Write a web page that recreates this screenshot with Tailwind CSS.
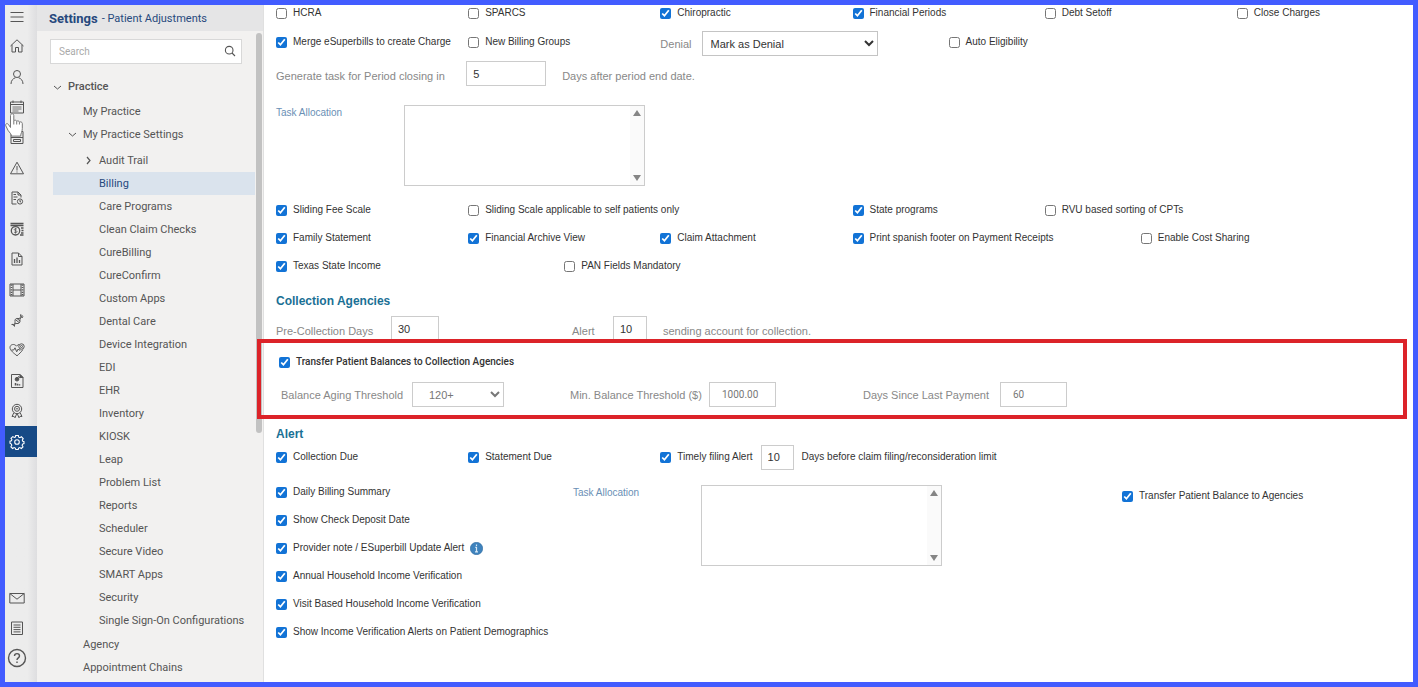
<!DOCTYPE html>
<html lang="en">
<head>
<meta charset="utf-8">
<title>Settings - Patient Adjustments</title>
<script src="https://cdn.jsdelivr.net/npm/@tailwindcss/browser@4"></script>
</head>
<body class="bg-white">
<div class="relative flex h-screen overflow-hidden border-[5px] border-[#425cff] font-['Liberation_Sans',Arial,sans-serif] text-[11px] leading-4 text-[#333]">

  <!-- Icon rail -->
  <nav aria-label="Modules" class="relative flex w-8 shrink-0 flex-col bg-linear-to-r from-[#ececec] from-70% to-[#dedee0] text-[#555]">
    <button aria-label="Menu" class="flex h-[26px] w-6 shrink-0 items-start justify-center pt-1"><svg class="size-4" viewBox="0 0 16 16" fill="none" stroke="currentColor" stroke-width="1.1"><path d="M1.5 3.5h13M1.5 8h13M1.5 12.5h13"/></svg></button>
    <div class="flex h-[426px] flex-col *:flex *:w-6 *:flex-1 *:items-center *:justify-center">
      <button aria-label="Home"><svg class="size-4" viewBox="0 0 16 16" fill="none" stroke="currentColor"><path d="M1.5 8 8 1.8 14.500 8M3 6.800V14h3.500V9.500h3V14H13V6.800"/></svg></button>
      <button aria-label="Patients"><svg class="size-4" viewBox="0 0 16 16" fill="none" stroke="currentColor"><circle cx="8" cy="5" r="3.500"/><path d="M2 15c0-3.500 2-5.500 4.500-6.300M14 15c0-3.500-2-5.500-4.500-6.300"/></svg></button>
      <button aria-label="Scheduler"><svg class="size-4" viewBox="0 0 16 16" fill="none" stroke="currentColor"><path d="M1.500 3h13v11h-13zM1.500 5.500h13M4 1.500V4M12 1.500V4"/><path d="M3.500 8h9M3.500 10h9M3.500 12h6" stroke-width=".8"/></svg></button>
      <button aria-label="Billing"><svg class="size-4" viewBox="0 0 16 16" fill="none" stroke="currentColor"><path d="M2 2.500h12v12H2zM2 8.500h12M4.500 10.500h7v2h-7zM6 5.500h4"/></svg></button>
      <button aria-label="Alerts"><svg class="size-4" viewBox="0 0 16 16" fill="none" stroke="currentColor"><path d="M8 2.200 14.500 13.800h-13zM8 6v4.500M8 11.500v1"/></svg></button>
      <button aria-label="Claims"><svg class="size-4" viewBox="0 0 16 16" fill="none" stroke="currentColor"><path d="M7.500 14H3V2h6l3 3v2.500M9 2v3h3M4.500 4.500h2.500M4.500 7h4M4.500 9.500h2.500"/><circle cx="11" cy="11.500" r="2.600"/><path d="M11 10v1.800h1"/></svg></button>
      <button aria-label="Payments"><svg class="size-4" viewBox="0 0 16 16" fill="none" stroke="currentColor"><path d="M1.500 2.500h13M1.500 4.500h13" stroke-width="1.500"/><path d="M12 7h2.500M12.500 9.500h2M12 12h2.500M11 14h3.500" stroke-width="1.300"/><circle cx="6.500" cy="9.800" r="4.200" stroke-width="1.300"/><path d="M8 8.200c-.8-.8-2.800-.6-2.800.4s2.800.9 2.800 2-2 1.300-3 .4M6.500 7v5.600" stroke-width=".8"/></svg></button>
      <button aria-label="Reports"><svg class="size-4" viewBox="0 0 16 16" fill="none" stroke="currentColor"><path d="M3 2h6.500L13 5.500V14H3zM9.500 2v3.500H13"/><path d="M5.500 12V8M8 12V6.500M10.500 12V9" stroke-width="1.300"/></svg></button>
      <button aria-label="Media"><svg class="size-4" viewBox="0 0 16 16" fill="none" stroke="currentColor"><path d="M1 2h14v12H1zM4 2v12M12 2v12M4 8h8"/><path d="M2.500 2.500v11M13.500 2.500v11" stroke-width="1.600" stroke-dasharray="1.200 1.200"/></svg></button>
      <button aria-label="Genomics"><svg class="size-4" viewBox="0 0 16 16" fill="none" stroke="currentColor"><path d="M2.500 12.500c2.500.5 4-.5 3.500-3s1.500-3.500 3-3 3.500-1 2.500-4M5.500 14.500c-.5-2.500 1-3.500 2.500-3s3.500-1 3-3 1-3.500 3-3.500M7 8l3 2.500M8 6.500l3 2.500M3 12l2.500 2M11.500 4l2 1.500M12 2.500l2 2"/></svg></button>
      <button aria-label="Vitals"><svg class="size-4" viewBox="0 0 16 16" fill="none" stroke="currentColor"><path d="M13.800 7.500C12.500 10 10 12 8 13.800 5 11.300 1 8.500 1 5.500c0-3.200 4.500-4.200 6.500-1.300C8 3.300 9 2.700 10 2.500"/><path d="M2.500 8h2.200L6 5.800l1.700 4L9.200 7l.8 1h1.500"/><circle cx="12.500" cy="4.500" r="2.700"/><circle cx="12.500" cy="4.500" r="1"/></svg></button>
      <button aria-label="Analytics"><svg class="size-4" viewBox="0 0 16 16" fill="none" stroke="currentColor"><path d="M2.500 1.500h8.500L14 4.500v10H2.500z"/><path d="M11 1.500v3h3z" fill="currentColor"/><circle cx="8" cy="6.200" r="1.800" fill="currentColor"/><path d="M9 3.500c1 .2 1.500.8 1.700 1.700"/><path d="M6.500 12.500V10M8.500 12.500v-1.700M10.500 12.500v-1.300" stroke-width="1.500"/></svg></button>
      <button aria-label="Awards"><svg class="size-4" viewBox="0 0 16 16" fill="none" stroke="currentColor"><circle cx="8" cy="6" r="4.700"/><circle cx="8" cy="5.800" r="2.500"/><path d="M6.800 5.800h2.400M4.800 9.800 3 13.500l2-.2 1 1.500 1.700-4M11.200 9.800l1.800 3.700-2-.2-1 1.500-1.700-4"/></svg></button>
      <button aria-label="Settings" class="min-w-8 bg-[#174a86] pr-2 text-white"><svg class="size-4" viewBox="0 0 16 16" fill="none" stroke="currentColor" stroke-width="1.100"><path d="M6.700 1.500h2.600l.4 1.700 1.200.5 1.500-.9 1.800 1.800-.9 1.500.5 1.200 1.200.4v1.900l-1.400.5-.5 1.200.9 1.500-1.700 1.700-1.500-.9-1.200.5-.4 1.400H6.800l-.5-1.400-1.200-.5-1.500.9-1.700-1.700.9-1.500-.5-1.200L1 9.300V7.200l1.400-.5.500-1.200L2 4.300 3.800 2.600l1.500.9 1.100-.4z"/><circle cx="8" cy="8" r="2.300"/></svg></button>
    </div>
    <div class="mt-auto flex flex-col pb-[9px] *:flex *:h-[30px] *:w-6 *:items-center *:justify-center">
      <button aria-label="Messages"><svg class="size-4" viewBox="0 0 16 16" fill="none" stroke="currentColor"><path d="M.8 3.500h14.400v9.500H.8zM.8 3.500 8 9.200l7.200-5.700"/></svg></button>
      <button aria-label="Notes"><svg class="size-4" viewBox="0 0 16 16" fill="none" stroke="currentColor"><path d="M2.500 2h11v12.500h-11zM4.500 5h7M4.500 7.300h7M4.500 9.600h7M4.500 11.900h7"/></svg></button>
      <button aria-label="Help"><svg class="size-5" viewBox="0 0 20 20" fill="none" stroke="currentColor" stroke-width="1.400"><circle cx="10" cy="10" r="8.500"/><path d="M7.500 8c0-3.200 5-3.200 5 0 0 1.800-2.500 2-2.500 4M10 13.500V15"/></svg></button>
    </div>
    <svg class="absolute top-[108px] left-0 h-6 w-[18px]" viewBox="0 0 18 24" fill="#fff" stroke="#777" stroke-linejoin="round"><path d="M5.500 14.500V2.500c0-2.300 3.300-2.300 3.300 0v5.400c.6-1.100 2.900-.9 2.900.6.600-1.100 2.700-.7 2.700.8.700-.9 2.900-.4 2.900 1.100v5.200c0 3.300-1.600 4.400-1.600 7.500H6.500c0-2-1.800-3.300-3.500-5.800L.9 13c-1-2.100 1.200-3.200 2.500-1.600z"/><path d="M8.800 8v3.500M11.700 8.500v3M14.400 9.300v2.200" fill="none"/></svg>
  </nav>

  <!-- Settings tree -->
  <aside class="flex w-[227px] shrink-0 flex-col border-r border-[#e0e0e0] bg-[#f2f1f0] font-[Roboto,sans-serif] text-[#555]">
    <h1 class="flex h-[26px] shrink-0 items-center gap-1 bg-[#e5e5e6] pl-3 pt-0.5 text-[11px] text-[#27497d]"><span class="text-[13px] font-bold">Settings</span><span>- Patient Adjustments</span></h1>
    <div class="flex min-h-0 flex-1 justify-between pt-0.5">
      <div class="w-[218px] pt-1.5 pl-[13px]">
        <div class="relative w-48">
          <input type="search" aria-label="Search" placeholder="Search" class="block h-[25px] w-full border border-[#d8d8d8] bg-white px-2 text-[10px] outline-none placeholder:text-[#aaa]">
          <svg class="absolute top-1.5 right-1.5 size-3" viewBox="0 0 12 12" fill="none" stroke="#555" stroke-width="1.100"><circle cx="5.200" cy="5.200" r="3.800"/><path d="m8 8 3 3"/></svg>
        </div>
        <ul class="pt-2.5 pl-[3px]">
          <li>
            <a href="#" class="flex h-[26px] items-center gap-1.5 font-medium"><svg class="size-[9px]" viewBox="0 0 9 9" fill="none" stroke="currentColor"><path d="m1 3 3.500 3L8 3"/></svg>Practice</a>
            <ul class="*:*:flex *:*:h-[23px] *:*:items-center">
              <li><a href="#" class="pl-[30px]">My Practice</a></li>
              <li><a href="#" class="gap-1.5 pl-[15px]"><svg class="size-[9px]" viewBox="0 0 9 9" fill="none" stroke="currentColor"><path d="m1 3 3.500 3L8 3"/></svg>My Practice Settings</a></li>
            </ul>
            <ul class="pt-[3px] pb-px *:*:flex *:*:h-[23px] *:*:items-center">
              <li><a href="#" class="gap-1.5 pl-[31px]"><svg class="size-[9px]" viewBox="0 0 9 9" fill="none" stroke="currentColor" stroke-width="1.200"><path d="m3 1 3 3.500L3 8"/></svg>Audit Trail</a></li>
              <li><a href="#" aria-current="page" class="bg-[#dae3ed] pl-[46px] text-[#27497d]">Billing</a></li>
              <li><a href="#" class="pl-[46px]">Care Programs</a></li>
              <li><a href="#" class="pl-[46px]">Clean Claim Checks</a></li>
              <li><a href="#" class="pl-[46px]">CureBilling</a></li>
              <li><a href="#" class="pl-[46px]">CureConfirm</a></li>
              <li><a href="#" class="pl-[46px]">Custom Apps</a></li>
              <li><a href="#" class="pl-[46px]">Dental Care</a></li>
              <li><a href="#" class="pl-[46px]">Device Integration</a></li>
              <li><a href="#" class="pl-[46px]">EDI</a></li>
              <li><a href="#" class="pl-[46px]">EHR</a></li>
              <li><a href="#" class="pl-[46px]">Inventory</a></li>
              <li><a href="#" class="pl-[46px]">KIOSK</a></li>
              <li><a href="#" class="pl-[46px]">Leap</a></li>
              <li><a href="#" class="pl-[46px]">Problem List</a></li>
              <li><a href="#" class="pl-[46px]">Reports</a></li>
              <li><a href="#" class="pl-[46px]">Scheduler</a></li>
              <li><a href="#" class="pl-[46px]">Secure Video</a></li>
              <li><a href="#" class="pl-[46px]">SMART Apps</a></li>
              <li><a href="#" class="pl-[46px]">Security</a></li>
              <li><a href="#" class="pl-[46px]">Single Sign-On Configurations</a></li>
            </ul>
            <ul class="*:*:flex *:*:h-[23px] *:*:items-center">
              <li><a href="#" class="pl-[30px]">Agency</a></li>
              <li><a href="#" class="pl-[30px]">Appointment Chains</a></li>
            </ul>
          </li>
        </ul>
      </div>
      <div class="mr-px h-[400px] w-1.5 rounded-sm bg-[#c2c2c2]"></div>
    </div>
  </aside>

  <!-- Billing settings form -->
  <main class="min-w-0 flex-1 pl-3">
    <form class="-mt-1.5 -mr-4 [&_input[type=checkbox]]:size-[11px] [&_input[type=checkbox]]:shrink-0 [&_input[type=checkbox]]:accent-[#1273d6] [&_label:has([type=checkbox])]:text-[10px]">
      <div class="grid h-7 grid-cols-12 items-center *:col-span-2 *:flex *:items-center *:gap-1.5">
        <label><input type="checkbox">HCRA</label>
        <label><input type="checkbox">SPARCS</label>
        <label><input type="checkbox" checked>Chiropractic</label>
        <label><input type="checkbox" checked>Financial Periods</label>
        <label><input type="checkbox">Debt Setoff</label>
        <label><input type="checkbox">Close Charges</label>
      </div>
      <div class="grid h-[29px] grid-cols-12 items-end">
        <label class="col-span-2 flex h-7 items-center gap-1.5"><input type="checkbox" checked>Merge eSuperbills to create Charge</label>
        <label class="col-span-2 flex h-7 items-center gap-1.5"><input type="checkbox">New Billing Groups</label>
        <label class="col-span-3 flex h-[25px] items-center gap-2.5 text-[#888]">Denial
          <select class="h-full w-44 border border-[#c4c4c4] bg-white px-1 text-[#333]"><option>Mark as Denial</option></select></label>
        <label class="col-span-2 flex h-7 items-center gap-1.5"><input type="checkbox">Auto Eligibility</label>
      </div>
      <div class="mt-[5px] grid grid-cols-12 items-end leading-5 text-[#888]">
        <label for="period" class="col-span-2">Generate task for Period closing in</label>
        <div class="col-span-4 -ml-0.5 flex items-end gap-4">
          <input id="period" value="5" class="h-[25px] w-20 border border-[#ccc] px-1.5 text-[#333]"><span>Days after period end date.</span></div>
      </div>
      <div class="mt-[19px] flex items-start">
        <label for="alloc1" class="w-32 text-[10px] leading-4 text-[#6a8fb5]">Task Allocation</label>
        <div class="flex h-[81px] w-[241px] border border-[#ccc]">
          <textarea id="alloc1" class="min-w-0 flex-1 resize-none outline-none"></textarea>
          <div class="flex w-3.5 flex-col items-center justify-between bg-[#fafafa] py-1"><svg class="h-1.5 w-2" viewBox="0 0 8 6" fill="#858585"><path d="M4 0 8 6H0z"/></svg><svg class="h-1.5 w-2" viewBox="0 0 8 6" fill="#858585"><path d="M4 6 0 0h8z"/></svg></div>
        </div>
      </div>
      <div class="mt-2.5 grid grid-cols-12 *:flex *:h-7 *:items-center *:gap-1.5">
        <label class="col-span-2"><input type="checkbox" checked>Sliding Fee Scale</label>
        <label class="col-span-4"><input type="checkbox">Sliding Scale applicable to self patients only</label>
        <label class="col-span-2"><input type="checkbox" checked>State programs</label>
        <label class="col-span-4"><input type="checkbox">RVU based sorting of CPTs</label>
        <label class="col-span-2"><input type="checkbox" checked>Family Statement</label>
        <label class="col-span-2"><input type="checkbox" checked>Financial Archive View</label>
        <label class="col-span-2"><input type="checkbox" checked>Claim Attachment</label>
        <label class="col-span-3"><input type="checkbox" checked>Print spanish footer on Payment Receipts</label>
        <label class="col-span-3"><input type="checkbox">Enable Cost Sharing</label>
        <label class="col-span-3"><input type="checkbox" checked>Texas State Income</label>
        <label class="col-span-3"><input type="checkbox">PAN Fields Mandatory</label>
      </div>

      <h2 class="mt-[11px] text-[12px] leading-5 font-bold text-[#1a7095]">Collection Agencies</h2>
      <div class="mt-[5px] flex h-[25px] items-end leading-5 text-[#888]">
        <label for="pre" class="w-[115px]">Pre-Collection Days</label>
        <input id="pre" value="30" class="h-full w-12 border border-[#ccc] px-1.5 text-[#333]">
        <label for="days" class="ml-[133px] w-[41px]">Alert</label>
        <input id="days" value="10" class="h-full w-[34px] border border-[#ccc] px-1.5 text-[#333]">
        <span class="ml-4">sending account for collection.</span>
      </div>

      <section class="relative z-10 -mt-0.5 mr-[22px] -ml-[19px] h-[80px] border-4 border-[#dc2329] pt-[11px] pl-[18px]">
        <label class="flex h-4 items-center gap-1.5 font-[Roboto,sans-serif] font-medium"><input type="checkbox" checked>Transfer Patient Balances to Collection Agencies</label>
        <div class="mt-3 flex h-[25px] items-center pl-0.5 text-[#888]">
          <label for="aging" class="w-[131px]">Balance Aging Threshold</label>
          <select id="aging" class="h-full w-[92px] border border-[#ccc] bg-white px-3 text-[#777]"><option>120+</option></select>
          <label for="minbal" class="ml-[66px] w-[139px]">Min. Balance Threshold ($)</label>
          <input id="minbal" value="1000.00" class="h-full w-[67px] border border-[#ccc] px-3 font-[Roboto,sans-serif] text-[10px] text-[#777]">
          <label for="since" class="ml-[87px] w-[137px]">Days Since Last Payment</label>
          <input id="since" value="60" class="h-full w-[67px] border border-[#ccc] px-3 font-[Roboto,sans-serif] text-[10px] text-[#777]">
        </div>
      </section>

      <h2 class="mt-[5px] text-[12px] leading-5 font-bold text-[#1a7095]">Alert</h2>
      <div class="grid h-[26px] grid-cols-12 items-center">
        <label class="col-span-2 flex items-center gap-1.5"><input type="checkbox" checked>Collection Due</label>
        <label class="col-span-2 flex items-center gap-1.5"><input type="checkbox" checked>Statement Due</label>
        <div class="col-span-5 flex items-center gap-2">
          <label class="flex items-center gap-1.5"><input type="checkbox" checked>Timely filing Alert</label>
          <input aria-label="Timely filing days" value="10" class="h-[25px] w-[33px] border border-[#ccc] px-1.5"><span class="text-[10px]">Days before claim filing/reconsideration limit</span>
        </div>
      </div>
      <div class="mt-2 flex">
        <div class="flex w-[297px] flex-col *:flex *:h-7 *:items-center *:gap-1.5">
          <label><input type="checkbox" checked>Daily Billing Summary</label>
          <label><input type="checkbox" checked>Show Check Deposit Date</label>
          <label><input type="checkbox" checked>Provider note / ESuperbill Update Alert<svg class="size-[13px]" viewBox="0 0 13 13"><circle cx="6.500" cy="6.500" r="6.200" fill="#3f83bd" stroke="#2f6a9f" stroke-width=".6"/><path d="M6.500 2.600v1.500M5.300 5.400h1.200v4.300M5 9.900h3" fill="none" stroke="#d9e9f6" stroke-width="1.200"/></svg></label>
          <label><input type="checkbox" checked>Annual Household Income Verification</label>
          <label><input type="checkbox" checked>Visit Based Household Income Verification</label>
          <label><input type="checkbox" checked>Show Income Verification Alerts on Patient Demographics</label>
        </div>
        <div class="flex flex-1 items-start pt-[7px]">
          <label for="alloc2" class="w-32 text-[10px] leading-4 text-[#6a8fb5]">Task Allocation</label>
          <div class="flex h-[81px] w-[241px] border border-[#ccc]">
            <textarea id="alloc2" class="min-w-0 flex-1 resize-none outline-none"></textarea>
            <div class="flex w-3.5 flex-col items-center justify-between bg-[#fafafa] py-1"><svg class="h-1.5 w-2" viewBox="0 0 8 6" fill="#858585"><path d="M4 0 8 6H0z"/></svg><svg class="h-1.5 w-2" viewBox="0 0 8 6" fill="#858585"><path d="M4 6 0 0h8z"/></svg></div>
          </div>
        </div>
        <label class="flex h-9 w-[307px] items-center gap-1.5"><input type="checkbox" checked>Transfer Patient Balance to Agencies</label>
      </div>
    </form>
  </main>
</div>
</body>
</html>
